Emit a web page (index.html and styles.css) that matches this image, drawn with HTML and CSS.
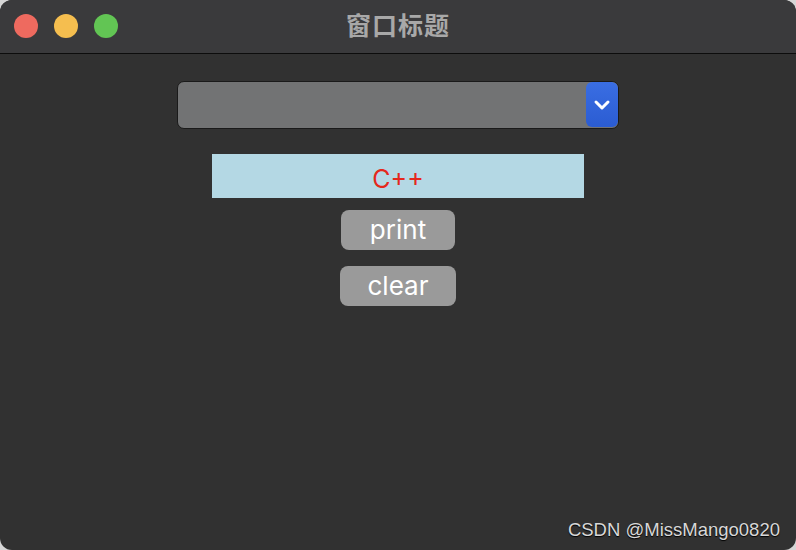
FILE: index.html
```html
<!DOCTYPE html>
<html lang="zh-CN">
<head>
  <meta charset="UTF-8">
  <meta name="viewport" content="width=device-width, initial-scale=1.0">
  <title>窗口标题</title>
  <link rel="stylesheet" href="styles.css">
</head>
<body>
<div class="window">
  <div class="titlebar">
    <div class="lights">
      <span class="light red"></span>
      <span class="light yellow"></span>
      <span class="light green"></span>
    </div>
    <div class="title">窗口标题</div>
  </div>

  <div class="content">
    <div class="combo">
      <div class="combo-value"></div>
      <div class="combo-arrow">
        <svg width="18" height="12" viewBox="0 0 18 12">
          <path d="M3 3 L9 9 L15 3" fill="none" stroke="#fff" stroke-width="3" stroke-linecap="round" stroke-linejoin="round"/>
        </svg>
      </div>
    </div>
    <div class="label">C++</div>
    <button class="btn btn-print">print</button>
    <button class="btn btn-clear">clear</button>
  </div>

  <div class="watermark">CSDN @MissMango0820</div>
</div>
</body>
</html>
```

FILE: styles.css
```css
body {
    margin: 0;
    background-color: #d6d6d6;
    font-family: Inter, "Liberation Sans", "Noto Sans CJK SC", sans-serif;
}

.window {
    position: relative;
    width: 796px;
    height: 550px;
    background-color: #313131;
    border-radius: 12px;
    overflow: hidden;
}

/* 标题栏 */
.titlebar {
    position: relative;
    height: 53px;
    background-color: #3a3a3c;
    border-bottom: 1px solid #0c0c0c;
    display: flex;
    align-items: center;
    justify-content: center;
}

.lights {
    position: absolute;
    left: 14px;
    top: 14px;
    display: flex;
    gap: 16px;
}

.light {
    width: 24px;
    height: 24px;
    border-radius: 50%;
}

.red { background-color: #ee6a5f; }
.yellow { background-color: #f5be4f; }
.green { background-color: #62c554; }

.title {
    color: #a8a8a8;
    font-family: "Noto Sans CJK SC", sans-serif;
    font-weight: bold;
    font-size: 25px;
    letter-spacing: 1px;
    margin-bottom: 5px;
}

.content {
    display: flex;
    flex-direction: column;
    align-items: center;
    padding-top: 27px;
}

/* 下拉框 */
.combo {
    width: 442px;
    height: 48px;
    box-sizing: border-box;
    display: flex;
    background-color: #727374;
    border: 1px solid #1a1a1a;
    border-radius: 7px;
    overflow: hidden;
}

.combo-value {
    flex: 1;
}

.combo-arrow {
    width: 32px;
    margin: 0 0 1px;
    background: linear-gradient(#3a6ee3, #2b5cd2);
    border-radius: 6px;
    display: flex;
    align-items: center;
    justify-content: center;
}

.label {
    margin-top: 25px;
    width: 372px;
    height: 44px;
    background-color: #b4d8e4;
    color: #e5281c;
    font-size: 25px;
    text-align: center;
    line-height: 50px;
}

.btn {
    height: 40px;
    padding: 0;
    border: none;
    border-radius: 8px;
    background-color: #9a9a9a;
    color: #ffffff;
    font-family: Inter, "Liberation Sans", sans-serif;
    font-size: 26px;
    line-height: 36px;
}

.btn-print {
    margin-top: 12px;
    width: 114px;
}

.btn-clear {
    margin-top: 16px;
    width: 116px;
}

.watermark {
    position: absolute;
    right: 16px;
    bottom: 9px;
    color: #d8d8d8;
    font-family: "Liberation Sans", sans-serif;
    font-size: 18.5px;
    text-shadow: 0 1px 1px #000;
}
```
